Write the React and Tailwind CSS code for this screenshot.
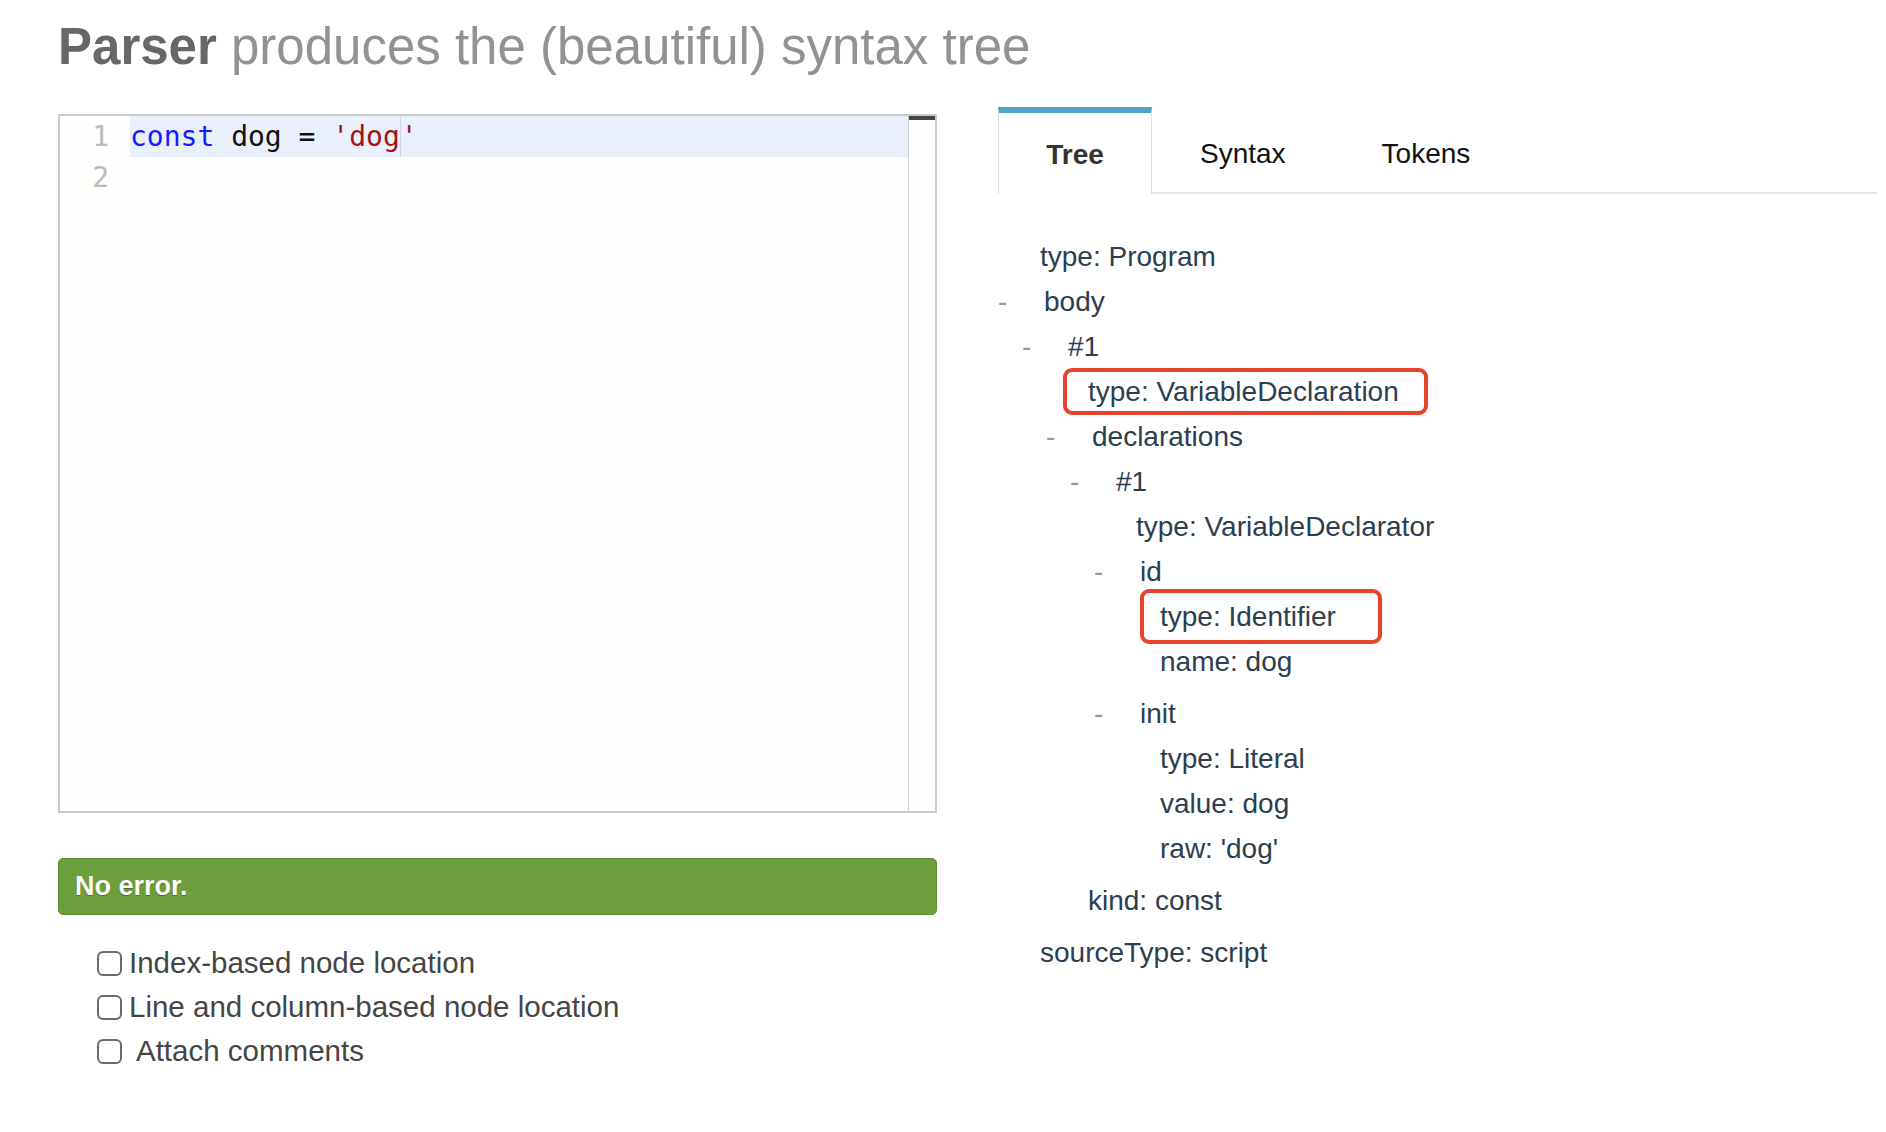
import React from "react";

const tree = [
  { leaf: "type: Program" },
  {
    key: "body",
    children: [
      {
        key: "#1",
        children: [
          { leaf: "type: VariableDeclaration", mark: "decl" },
          {
            key: "declarations",
            children: [
              {
                key: "#1",
                children: [
                  { leaf: "type: VariableDeclarator" },
                  {
                    key: "id",
                    children: [
                      { leaf: "type: Identifier", mark: "ident" },
                      { leaf: "name: dog" },
                    ],
                  },
                  {
                    key: "init",
                    children: [
                      { leaf: "type: Literal" },
                      { leaf: "value: dog" },
                      { leaf: "raw: 'dog'" },
                    ],
                  },
                ],
              },
            ],
          },
          { leaf: "kind: const" },
        ],
      },
    ],
  },
  { leaf: "sourceType: script" },
];

const TreeNode = ({ node }) => {
  if (node.leaf) {
    return (
      <div className="relative pl-[42px] h-[45px] leading-[45px]">
        {node.mark === "decl" && (
          <span className="absolute left-[17px] top-[-1px] w-[365px] h-[47px] border-[4px] border-[#e8412c] rounded-[9px]" />
        )}
        {node.mark === "ident" && (
          <span className="absolute left-[22px] top-[-5px] w-[242px] h-[55px] border-[4px] border-[#e8412c] rounded-[9px]" />
        )}
        <span className="relative">{node.leaf}</span>
      </div>
    );
  }
  return (
    <div>
      <div className="flex h-[45px] leading-[45px]">
        <span className="w-[46px] text-[#999]">-</span>
        <span>{node.key}</span>
      </div>
      <div className="pl-[24px] mb-[7px]">
        {node.children.map((c, i) => (
          <TreeNode key={i} node={c} />
        ))}
      </div>
    </div>
  );
};

const Checkbox = ({ label, extra }) => (
  <div className="flex items-center h-[44px]">
    <span className="w-[25px] h-[25px] border-2 border-[#6a6a6a] rounded-[6px] bg-white shrink-0" />
    <span className={extra ? "pl-[14px]" : "pl-[7px]"}>{label}</span>
  </div>
);

export default function App() {
  return (
    <main className="min-h-screen bg-white font-['Liberation_Sans',Arial,sans-serif] pl-[58px] pr-[9px]">
      {/* Heading */}
      <h1 className="h-[107px] pt-[17px] text-[51px] leading-[60px] whitespace-nowrap">
        <span className="font-bold text-[#676767]">Parser</span>
        <span className="font-normal text-[#929292]"> produces the (beautiful) syntax tree</span>
      </h1>

      <div className="flex gap-[61px]">
        {/* Left column */}
        <div className="w-[879px] shrink-0">
          <div className="mt-[7px] h-[699px] border-2 border-[#cccccc] bg-[#fefefd] flex">
            <div className="flex-1 flex">
              <div className="w-[70px] pr-[21px] text-right font-['DejaVu_Sans_Mono',monospace] text-[28px] text-[#bbbbbb]">
                <div className="h-[41px] leading-[41px]">1</div>
                <div className="h-[41px] leading-[41px]">2</div>
              </div>
              <div className="flex-1 font-['DejaVu_Sans_Mono',monospace] text-[28px]">
                <div className="h-[41px] leading-[41px] bg-[#e9f0fc] whitespace-pre">
                  <span className="text-[#1a1aff]">const</span>
                  <span className="text-[#111]"> dog = </span>
                  <span className="text-[#a31515]">'dog</span>
                  <span className="inline-block w-px h-[41px] align-top bg-[#cfd6e2]" />
                  <span className="text-[#a31515]">'</span>
                </div>
                <div className="h-[41px]" />
              </div>
            </div>
            <div className="w-[27px] border-l border-[#cccccc]">
              <div className="h-[4px] bg-[#444444]" />
            </div>
          </div>

          <div className="mt-[45px] h-[57px] flex items-center pl-[16px] rounded-[5px] border border-[#5d8e33] bg-[#6c9f3b] text-white text-[27px] font-bold [text-shadow:0_1px_1px_rgba(0,0,0,0.35)]">
            No error.
          </div>

          <div className="mt-[26px] pl-[39px] text-[29.5px] text-[#454545]">
            <Checkbox label="Index-based node location" />
            <Checkbox label="Line and column-based node location" />
            <Checkbox label="Attach comments" extra />
          </div>
        </div>

        {/* Right column */}
        <div className="flex-1">
          <div className="flex h-[87px] text-[28px]">
            <div className="w-[154px] flex items-center justify-center pt-[2px] border-t-[6px] border-t-[#4fa3c8] border-x border-x-[#dddddd] font-bold text-[#333]">
              Tree
            </div>
            <div className="px-[48px] flex items-center pt-[8px] border-b-2 border-[#e3e3e3] text-[#111]">
              Syntax
            </div>
            <div className="px-[48px] flex items-center pt-[8px] border-b-2 border-[#e3e3e3] text-[#111]">
              Tokens
            </div>
            <div className="flex-1 border-b-2 border-[#e3e3e3]" />
          </div>

          <div className="pt-[40px] text-[28px] text-[#2c3e50]">
            {tree.map((n, i) => (
              <TreeNode key={i} node={n} />
            ))}
          </div>
        </div>
      </div>
    </main>
  );
}
